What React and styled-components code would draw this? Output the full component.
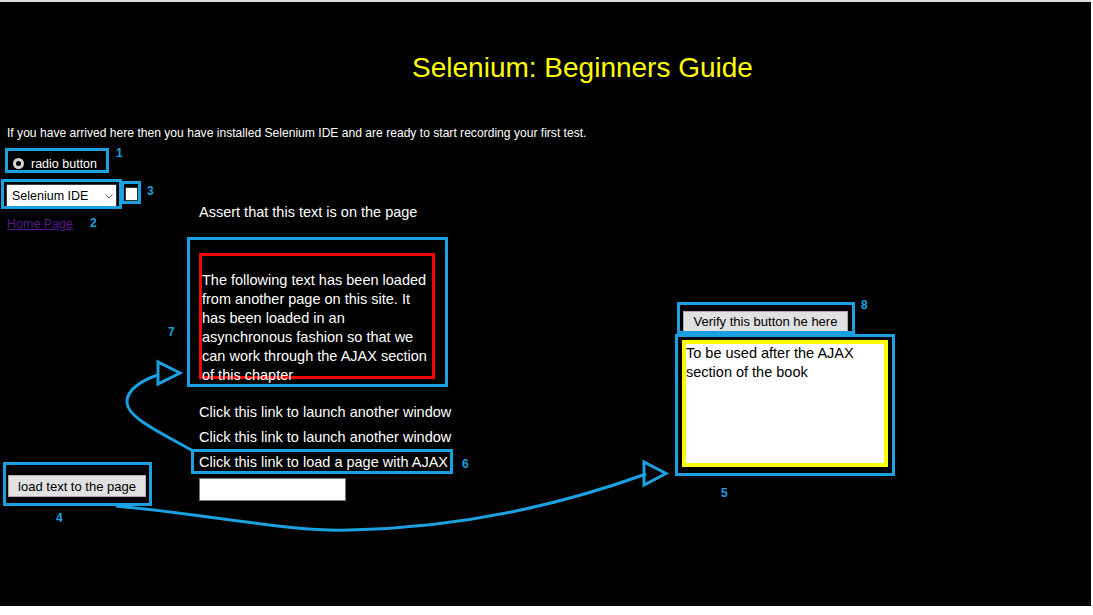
import styled, { createGlobalStyle } from "styled-components";

const GlobalStyle = createGlobalStyle`
  html, body {
    margin: 0;
    padding: 0;
    background: #ffffff;
  }
  body {
    font-family: "Liberation Sans", Arial, sans-serif;
  }
`;

const BLUE = "#1ba1e2";

const Page = styled.div`
  position: relative;
  width: 1091px;
  height: 606px;
  background: #000;
  color: #fff;
  overflow: hidden;
`;

const TopRule = styled.div`
  height: 2px;
  background: #dcdcdc;
`;

const Title = styled.h1`
  margin: 50px 0 0;
  padding-left: 74px;
  text-align: center;
  font-size: 28px;
  line-height: 32px;
  font-weight: 400;
  color: #ffff00;
`;

const Intro = styled.p`
  margin: 42px 0 0;
  padding-left: 7px;
  font-size: 12.1px;
  line-height: 15px;
`;

const RadioRow = styled.label`
  display: flex;
  margin-top: 16px;
  padding-left: 13px;
  height: 15px;
  font-size: 12.5px;
  line-height: 15px;
`;

const Radio = styled.span`
  box-sizing: border-box;
  width: 11px;
  height: 11px;
  margin-top: 1px;
  border-radius: 50%;
  border: 3px solid #d6d6d6;
  background: #000;
`;

const RadioText = styled.span`
  margin-left: 7px;
`;

const Columns = styled.div`
  display: flex;
  margin-top: 12px;
`;

const LeftCol = styled.div`
  width: 199px;
  display: flex;
  flex-direction: column;
  align-items: flex-start;
`;

const SelectRow = styled.div`
  display: flex;
  gap: 8px;
  padding-left: 6px;
  height: 24px;
`;

const SelectWrap = styled.div`
  position: relative;
  width: 111px;
  height: 24px;
`;

const Select = styled.select`
  appearance: none;
  box-sizing: border-box;
  width: 100%;
  height: 100%;
  margin: 0;
  padding: 0 0 0 5px;
  border: 1px solid #3a3a3a;
  border-radius: 0;
  background: #fff;
  color: #000;
  font-family: "Liberation Sans", Arial, sans-serif;
  font-size: 12.5px;
`;

const Chevron = styled.svg`
  position: absolute;
  right: 4px;
  top: 10px;
  pointer-events: none;
`;

const Check = styled.span`
  box-sizing: border-box;
  width: 13px;
  height: 14px;
  margin-top: 3px;
  background: #fff;
  border: 1px solid #333;
`;

const HomeLink = styled.a`
  margin-top: 9px;
  padding-left: 7px;
  font-size: 12.5px;
  line-height: 15px;
  color: #551a8b;
  text-decoration: underline;
`;

const GrayButton = styled.button`
  box-sizing: border-box;
  width: ${(p) => p.$w}px;
  height: ${(p) => p.$h}px;
  margin: 0;
  padding: 0;
  background: #e1e1e1;
  border: 1px solid #adadad;
  border-radius: 0;
  color: #000;
  font-family: "Liberation Sans", Arial, sans-serif;
  font-size: 13px;
`;

const LoadButton = styled(GrayButton)`
  margin: 243px 0 0 8px;
`;

const MidCol = styled.div`
  width: 483px;
  padding-top: 20px;
  font-size: 14.5px;
`;

const AssertText = styled.div`
  line-height: 17px;
`;

const AjaxBox = styled.div`
  box-sizing: border-box;
  width: 236px;
  height: 126px;
  margin-top: 32px;
  padding-top: 15px;
  border: 3px solid #ff0000;
  line-height: 19px;
`;

const Links = styled.div``;

const LinkLine = styled.div`
  line-height: 25px;
  &:first-of-type {
    margin-top: 21px;
  }
`;

const TextInput = styled.input`
  display: block;
  box-sizing: border-box;
  width: 147px;
  height: 23px;
  margin: 3px 0 0;
  border: 1px solid #767676;
  background: #fff;
`;

const RightCol = styled.div`
  padding-top: 127px;
  display: flex;
  flex-direction: column;
  align-items: flex-start;
`;

const VerifyButton = styled(GrayButton)`
  margin-left: 1px;
`;

const Area = styled.textarea`
  box-sizing: border-box;
  width: 206px;
  height: 127px;
  margin: 8px 0 0;
  padding: 0;
  border: 4px solid #ffff00;
  background: #fff;
  color: #000;
  resize: none;
  overflow: hidden;
  font-family: "Liberation Sans", Arial, sans-serif;
  font-size: 14.5px;
  line-height: 19px;
`;

const Overlay = styled.div`
  position: absolute;
  inset: 0;
  pointer-events: none;
`;

const Mark = styled.div`
  position: absolute;
  box-sizing: border-box;
  left: ${(p) => p.$x}px;
  top: ${(p) => p.$y}px;
  width: ${(p) => p.$w}px;
  height: ${(p) => p.$h}px;
  border: 3px solid ${BLUE};
`;

const Num = styled.span`
  position: absolute;
  left: ${(p) => p.$x - 4}px;
  top: ${(p) => p.$y - 7}px;
  font-size: 12px;
  line-height: 14px;
  font-weight: 700;
  color: ${BLUE};
`;

const Arrows = styled.svg`
  position: absolute;
  left: 0;
  top: 0;
`;

const marks = [
  [5, 148, 104, 25],
  [1, 179, 121, 30],
  [121, 181, 20, 23],
  [187, 237, 261, 150],
  [191, 449, 262, 25],
  [3, 462, 149, 44],
  [677, 302, 178, 32],
  [675, 334, 220, 142],
];

const nums = [
  ["1", 120, 153],
  ["2", 94, 223],
  ["3", 151, 191],
  ["4", 60, 518],
  ["5", 725, 493],
  ["6", 466, 464],
  ["7", 172, 332],
  ["8", 865, 305],
];

export default function App() {
  return (
    <>
      <GlobalStyle />
      <Page>
        <TopRule />
        <Title>Selenium: Beginners Guide</Title>
        <Intro>
          If you have arrived here then you have installed Selenium IDE and are
          ready to start recording your first test.
        </Intro>
        <RadioRow>
          <Radio />
          <RadioText>radio button</RadioText>
        </RadioRow>
        <Columns>
          <LeftCol>
            <SelectRow>
              <SelectWrap>
                <Select defaultValue="ide">
                  <option value="ide">Selenium IDE</option>
                </Select>
                <Chevron width="8" height="5" viewBox="0 0 8 5">
                  <polyline points="0.5,0.5 4,4 7.5,0.5" fill="none" stroke="#666" strokeWidth="1" />
                </Chevron>
              </SelectWrap>
              <Check />
            </SelectRow>
            <HomeLink href="#">Home Page</HomeLink>
            <LoadButton $w={138} $h={22}>load text to the page</LoadButton>
          </LeftCol>
          <MidCol>
            <AssertText>Assert that this text is on the page</AssertText>
            <AjaxBox>
              The following text has been loaded from another page on this
              site. It has been loaded in an asynchronous fashion so that we can
              work through the AJAX section of this chapter
            </AjaxBox>
            <Links>
              <LinkLine>Click this link to launch another window</LinkLine>
              <LinkLine>Click this link to launch another window</LinkLine>
              <LinkLine>Click this link to load a page with AJAX</LinkLine>
            </Links>
            <TextInput type="text" />
          </MidCol>
          <RightCol>
            <VerifyButton $w={165} $h={21}>Verify this button he here</VerifyButton>
            <Area defaultValue="To be used after the AJAX section of the book" />
          </RightCol>
        </Columns>

        <Overlay>
          {marks.map(([x, y, w, h], i) => (
            <Mark key={i} $x={x} $y={y} $w={w} $h={h} />
          ))}
          {nums.map(([t, x, y]) => (
            <Num key={t} $x={x} $y={y}>{t}</Num>
          ))}
          <Arrows width="1091" height="606" viewBox="0 0 1091 606">
            <g fill="none" stroke={BLUE} strokeWidth="3" strokeLinejoin="miter">
              <path d="M116,506 C 220,516 290,532 350,530 C 460,528 560,505 646,474" />
              <polygon points="644,462 644,485 666,473.5" />
              <path d="M193,451 C 160,432 128,418 127,403 C 126,390 142,380 158,375" />
              <polygon points="158,362 158,384 180,373" />
            </g>
          </Arrows>
        </Overlay>
      </Page>
    </>
  );
}
